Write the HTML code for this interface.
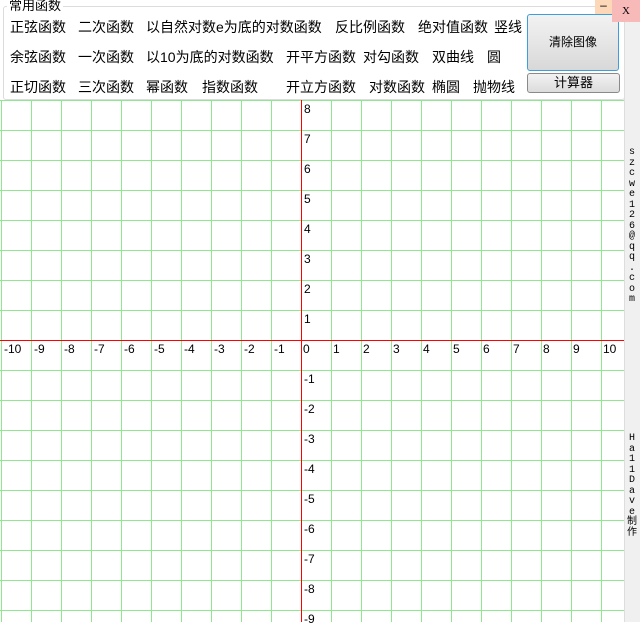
<!DOCTYPE html>
<html><head><meta charset="utf-8"><style>
body{margin:0;width:640px;height:622px;overflow:hidden;background:#fff;font-family:"Liberation Sans","Noto Sans CJK SC",sans-serif;position:relative}
.t{position:absolute;font-size:14px;color:#000;white-space:nowrap;line-height:16px}
.n{position:absolute;font-size:12px;font-family:"Liberation Sans",sans-serif;line-height:13px}
.side{position:absolute;left:624px;top:0;width:16px;height:622px;background:#f0f0f0;border-left:1px solid #ddd}
.v{position:absolute;left:627px;font-family:"Liberation Mono","Noto Sans CJK SC",monospace;font-size:10px;line-height:10.5px;width:10px;text-align:center;color:#000}
</style></head><body>
<div style="position:absolute;left:3px;top:6px;width:620px;height:92px;border:1px solid #dcdcdc;border-radius:3px"></div>
<div class="t" style="left:7px;top:-2px;background:#fff;padding:0 2px;font-size:13px">常用函数</div>
<div class="t" style="left:10px;top:19px">正弦函数</div>
<div class="t" style="left:78px;top:19px">二次函数</div>
<div class="t" style="left:146px;top:19px">以自然对数e为底的对数函数</div>
<div class="t" style="left:335px;top:19px">反比例函数</div>
<div class="t" style="left:418px;top:19px">绝对值函数</div>
<div class="t" style="left:494px;top:19px">竖线</div>
<div class="t" style="left:10px;top:49px">余弦函数</div>
<div class="t" style="left:78px;top:49px">一次函数</div>
<div class="t" style="left:146px;top:49px">以10为底的对数函数</div>
<div class="t" style="left:286px;top:49px">开平方函数</div>
<div class="t" style="left:363px;top:49px">对勾函数</div>
<div class="t" style="left:432px;top:49px">双曲线</div>
<div class="t" style="left:487px;top:49px">圆</div>
<div class="t" style="left:10px;top:79px">正切函数</div>
<div class="t" style="left:78px;top:79px">三次函数</div>
<div class="t" style="left:146px;top:79px">幂函数</div>
<div class="t" style="left:202px;top:79px">指数函数</div>
<div class="t" style="left:286px;top:79px">开立方函数</div>
<div class="t" style="left:369px;top:79px">对数函数</div>
<div class="t" style="left:432px;top:79px">椭圆</div>
<div class="t" style="left:473px;top:79px">抛物线</div>
<div style="position:absolute;left:527px;top:14px;width:90px;height:55px;border:1px solid #3c9fdc;border-radius:3px;background:linear-gradient(#f2f2f2,#e6e6e6 50%,#d8d8d8);font-size:12px;text-align:center;line-height:55px">清除图像</div>
<div style="position:absolute;left:527px;top:73px;width:91px;height:18px;border:1px solid #8a8a8a;border-radius:3px;background:linear-gradient(#f2f2f2,#dcdcdc);font-size:13px;text-align:center;line-height:18px">计算器</div>
<div class="side"></div>
<div style="position:absolute;left:595px;top:0;width:17px;height:14px;background:#fcd8b8;font-size:12px;text-align:center;line-height:10px">–</div>
<div style="position:absolute;left:612px;top:0;width:28px;height:22px;background:#f8b9b9;font-size:11px;text-align:center;line-height:22px;font-family:'Liberation Serif',serif">X</div>
<svg style="position:absolute;left:0;top:0" width="624" height="622">
<g stroke="#8fe88f" stroke-width="1">
<line x1="0" y1="100.5" x2="624" y2="100.5"/>
<line x1="1.5" y1="100" x2="1.5" y2="622"/>
<line x1="31.5" y1="100" x2="31.5" y2="622"/>
<line x1="61.5" y1="100" x2="61.5" y2="622"/>
<line x1="91.5" y1="100" x2="91.5" y2="622"/>
<line x1="121.5" y1="100" x2="121.5" y2="622"/>
<line x1="151.5" y1="100" x2="151.5" y2="622"/>
<line x1="181.5" y1="100" x2="181.5" y2="622"/>
<line x1="211.5" y1="100" x2="211.5" y2="622"/>
<line x1="241.5" y1="100" x2="241.5" y2="622"/>
<line x1="271.5" y1="100" x2="271.5" y2="622"/>
<line x1="331.5" y1="100" x2="331.5" y2="622"/>
<line x1="361.5" y1="100" x2="361.5" y2="622"/>
<line x1="391.5" y1="100" x2="391.5" y2="622"/>
<line x1="421.5" y1="100" x2="421.5" y2="622"/>
<line x1="451.5" y1="100" x2="451.5" y2="622"/>
<line x1="481.5" y1="100" x2="481.5" y2="622"/>
<line x1="511.5" y1="100" x2="511.5" y2="622"/>
<line x1="541.5" y1="100" x2="541.5" y2="622"/>
<line x1="571.5" y1="100" x2="571.5" y2="622"/>
<line x1="601.5" y1="100" x2="601.5" y2="622"/>
<line x1="0" y1="130.5" x2="624" y2="130.5"/>
<line x1="0" y1="160.5" x2="624" y2="160.5"/>
<line x1="0" y1="190.5" x2="624" y2="190.5"/>
<line x1="0" y1="220.5" x2="624" y2="220.5"/>
<line x1="0" y1="250.5" x2="624" y2="250.5"/>
<line x1="0" y1="280.5" x2="624" y2="280.5"/>
<line x1="0" y1="310.5" x2="624" y2="310.5"/>
<line x1="0" y1="370.5" x2="624" y2="370.5"/>
<line x1="0" y1="400.5" x2="624" y2="400.5"/>
<line x1="0" y1="430.5" x2="624" y2="430.5"/>
<line x1="0" y1="460.5" x2="624" y2="460.5"/>
<line x1="0" y1="490.5" x2="624" y2="490.5"/>
<line x1="0" y1="520.5" x2="624" y2="520.5"/>
<line x1="0" y1="550.5" x2="624" y2="550.5"/>
<line x1="0" y1="580.5" x2="624" y2="580.5"/>
<line x1="0" y1="610.5" x2="624" y2="610.5"/>
</g>
<line x1="0" y1="340.5" x2="624" y2="340.5" stroke="#f00"/>
<line x1="301.5" y1="100" x2="301.5" y2="622" stroke="#f00"/>
</svg>
<div class="n" style="left:4px;top:343px">-10</div>
<div class="n" style="left:34px;top:343px">-9</div>
<div class="n" style="left:64px;top:343px">-8</div>
<div class="n" style="left:94px;top:343px">-7</div>
<div class="n" style="left:124px;top:343px">-6</div>
<div class="n" style="left:154px;top:343px">-5</div>
<div class="n" style="left:184px;top:343px">-4</div>
<div class="n" style="left:214px;top:343px">-3</div>
<div class="n" style="left:244px;top:343px">-2</div>
<div class="n" style="left:274px;top:343px">-1</div>
<div class="n" style="left:303px;top:343px">0</div>
<div class="n" style="left:333px;top:343px">1</div>
<div class="n" style="left:363px;top:343px">2</div>
<div class="n" style="left:393px;top:343px">3</div>
<div class="n" style="left:423px;top:343px">4</div>
<div class="n" style="left:453px;top:343px">5</div>
<div class="n" style="left:483px;top:343px">6</div>
<div class="n" style="left:513px;top:343px">7</div>
<div class="n" style="left:543px;top:343px">8</div>
<div class="n" style="left:573px;top:343px">9</div>
<div class="n" style="left:603px;top:343px">10</div>
<div class="n" style="left:304px;top:103px">8</div>
<div class="n" style="left:304px;top:133px">7</div>
<div class="n" style="left:304px;top:163px">6</div>
<div class="n" style="left:304px;top:193px">5</div>
<div class="n" style="left:304px;top:223px">4</div>
<div class="n" style="left:304px;top:253px">3</div>
<div class="n" style="left:304px;top:283px">2</div>
<div class="n" style="left:304px;top:313px">1</div>
<div class="n" style="left:304px;top:373px">-1</div>
<div class="n" style="left:304px;top:403px">-2</div>
<div class="n" style="left:304px;top:433px">-3</div>
<div class="n" style="left:304px;top:463px">-4</div>
<div class="n" style="left:304px;top:493px">-5</div>
<div class="n" style="left:304px;top:523px">-6</div>
<div class="n" style="left:304px;top:553px">-7</div>
<div class="n" style="left:304px;top:583px">-8</div>
<div class="n" style="left:304px;top:613px">-9</div>
<div class="v" style="top:148px">s<br>z<br>c<br>w<br>e<br>1<br>2<br>6<br>@<br>q<br>q<br>.<br>c<br>o<br>m</div>
<div class="v" style="top:434px">H<br>a<br>1<br>1<br>D<br>a<br>v<br>e<br>制<br>作</div>
</body></html>
